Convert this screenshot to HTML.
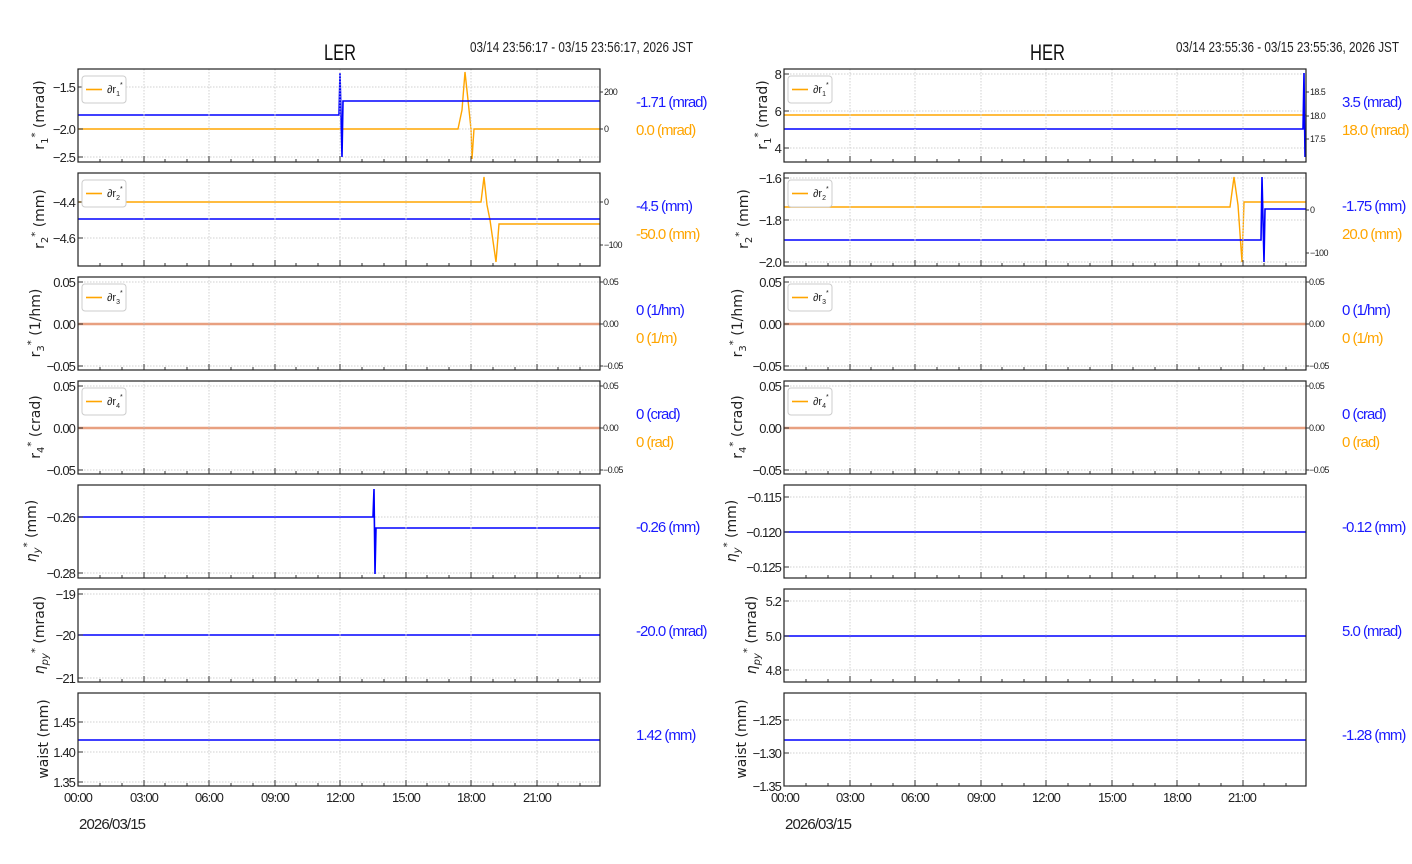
<!DOCTYPE html>
<html><head><meta charset="utf-8"><style>
html,body{margin:0;padding:0;background:#fff;width:1412px;height:864px;overflow:hidden}
svg{display:block}
.t{font-family:"Liberation Sans",sans-serif;font-size:13px;fill:#222;letter-spacing:-0.9px}
.s{font-family:"Liberation Sans",sans-serif;font-size:9px;fill:#222;letter-spacing:-0.6px}
.yl{font-family:"DejaVu Sans","Liberation Sans",sans-serif;font-size:14px;fill:#222}
.vb,.vo{font-family:"Liberation Sans",sans-serif;font-size:15px;letter-spacing:-1px}
.vb{fill:#1a1aff}.vo{fill:#ffa500}
.g{stroke:#d0d0d0;stroke-width:1;stroke-dasharray:1.5 1.5}
.b{fill:none;stroke:#0000ff;stroke-width:1.6}
.o{fill:none;stroke:#ffa500;stroke-width:1.4}
</style></head><body>
<svg width="1412" height="864" viewBox="0 0 1412 864">
<defs>
<g id="fr">
<g class="g"><path d="M66 0V93M131 0V93M197 0V93M262 0V93M328 0V93M393 0V93M459 0V93"/></g>
<path d="M0 93V87M66 93V87M131 93V87M197 93V87M262 93V87M328 93V87M393 93V87M459 93V87M22 93V90M44 93V90M87 93V90M109 93V90M153 93V90M175 93V90M218 93V90M240 93V90M284 93V90M306 93V90M349 93V90M371 93V90M415 93V90M437 93V90M480 93V90M502 93V90" stroke="#333" stroke-width="1"/>
<rect x="0" y="0" width="522" height="93" fill="none" stroke="#222" stroke-width="1.2"/>
</g>
<g id="lg"><rect x="0" y="0" width="44" height="27" rx="3" fill="#fff" stroke="#ccc"/><path d="M4 13.5H20" stroke="#ffa500" stroke-width="1.6"/></g>
</defs>

<text x="324" y="60" textLength="32" lengthAdjust="spacingAndGlyphs" style="font-family:'Liberation Sans',sans-serif;font-size:22px;fill:#111">LER</text>
<text x="470" y="52" textLength="223" lengthAdjust="spacingAndGlyphs" style="font-family:'Liberation Sans',sans-serif;font-size:15px;fill:#222">03/14 23:56:17 - 03/15 23:56:17, 2026 JST</text>
<text x="1030" y="60" textLength="35" lengthAdjust="spacingAndGlyphs" style="font-family:'Liberation Sans',sans-serif;font-size:22px;fill:#111">HER</text>
<text x="1176" y="52" textLength="223" lengthAdjust="spacingAndGlyphs" style="font-family:'Liberation Sans',sans-serif;font-size:15px;fill:#222">03/14 23:55:36 - 03/15 23:55:36, 2026 JST</text>

<g class="g">
<path d="M78 87H600M78 129H600M78 157H600M78 202H600M78 238H600M78 282H600M78 324H600M78 366H600M78 386H600M78 428H600M78 470H600M78 517H600M78 573H600M78 594H600M78 635H600M78 678H600M78 722H600M78 752H600M78 782H600"/>
<path d="M784 74H1306M784 111H1306M784 148H1306M784 178H1306M784 220H1306M784 262H1306M784 282H1306M784 324H1306M784 366H1306M784 386H1306M784 428H1306M784 470H1306M784 497H1306M784 532H1306M784 567H1306M784 601H1306M784 636H1306M784 670H1306M784 720H1306M784 753H1306M784 786H1306"/>
</g>

<path class="o" d="M78 129H458L462 110L465 72L468 100L471 129L472 159L474 129H600"/>
<path class="b" d="M78 115H339L340 73L341 115L342 157L343 101H600"/>
<path class="o" d="M78 202H481L484 177L487 205L490 220L496 262L499 224H600"/>
<path class="b" d="M78 219H600"/>
<path d="M78 324H600" stroke="#e8a080" stroke-width="2.5"/>
<path d="M78 428H600" stroke="#e8a080" stroke-width="2.5"/>
<path class="b" d="M78 517H373L374 489L375 574L376 528H600"/>
<path class="b" d="M78 635H600"/>
<path class="b" d="M78 740H600"/>

<path class="o" d="M784 115H1306"/>
<path class="b" d="M784 129H1303L1304 73L1305 157"/>
<path class="o" d="M784 207H1230L1234 177L1238 205L1242 262L1244 202H1306"/>
<path class="b" d="M784 240H1261L1262 177L1264 262L1265 209H1306"/>
<path d="M784 324H1306" stroke="#e8a080" stroke-width="2.5"/>
<path d="M784 428H1306" stroke="#e8a080" stroke-width="2.5"/>
<path class="b" d="M784 532H1306"/>
<path class="b" d="M784 636H1306"/>
<path class="b" d="M784 740H1306"/>

<use href="#fr" x="78" y="69"/><use href="#fr" x="78" y="173"/><use href="#fr" x="78" y="277"/><use href="#fr" x="78" y="381"/><use href="#fr" x="78" y="485"/><use href="#fr" x="78" y="589"/><use href="#fr" x="78" y="693"/>
<use href="#fr" x="784" y="69"/><use href="#fr" x="784" y="173"/><use href="#fr" x="784" y="277"/><use href="#fr" x="784" y="381"/><use href="#fr" x="784" y="485"/><use href="#fr" x="784" y="589"/><use href="#fr" x="784" y="693"/>

<path stroke="#333" d="M78 87h5M78 129h5M78 157h5M78 202h5M78 238h5M78 282h5M78 324h5M78 366h5M78 386h5M78 428h5M78 470h5M78 517h5M78 573h5M78 594h5M78 635h5M78 678h5M78 722h5M78 752h5M78 782h5
M784 74h5M784 111h5M784 148h5M784 178h5M784 220h5M784 262h5M784 282h5M784 324h5M784 366h5M784 386h5M784 428h5M784 470h5M784 497h5M784 532h5M784 567h5M784 601h5M784 636h5M784 670h5M784 720h5M784 753h5M784 786h5
M600 92h3M600 129h3M600 202h3M600 245h3M600 282h3M600 324h3M600 366h3M600 386h3M600 428h3M600 470h3
M1306 92h3M1306 116h3M1306 139h3M1306 210h3M1306 253h3M1306 282h3M1306 324h3M1306 366h3M1306 386h3M1306 428h3M1306 470h3"/>

<g class="t" text-anchor="end">
<text x="75" y="92">−1.5</text><text x="75" y="134">−2.0</text><text x="75" y="162">−2.5</text>
<text x="75" y="207">−4.4</text><text x="75" y="243">−4.6</text>
<text x="75" y="287">0.05</text><text x="75" y="329">0.00</text><text x="75" y="371">−0.05</text>
<text x="75" y="391">0.05</text><text x="75" y="433">0.00</text><text x="75" y="475">−0.05</text>
<text x="75" y="522">−0.26</text><text x="75" y="578">−0.28</text>
<text x="75" y="599">−19</text><text x="75" y="640">−20</text><text x="75" y="683">−21</text>
<text x="75" y="727">1.45</text><text x="75" y="757">1.40</text><text x="75" y="787">1.35</text>
<text x="781" y="79">8</text><text x="781" y="116">6</text><text x="781" y="153">4</text>
<text x="781" y="183">−1.6</text><text x="781" y="225">−1.8</text><text x="781" y="267">−2.0</text>
<text x="781" y="287">0.05</text><text x="781" y="329">0.00</text><text x="781" y="371">−0.05</text>
<text x="781" y="391">0.05</text><text x="781" y="433">0.00</text><text x="781" y="475">−0.05</text>
<text x="781" y="502">−0.115</text><text x="781" y="537">−0.120</text><text x="781" y="572">−0.125</text>
<text x="781" y="606">5.2</text><text x="781" y="641">5.0</text><text x="781" y="675">4.8</text>
<text x="781" y="725">−1.25</text><text x="781" y="758">−1.30</text><text x="781" y="791">−1.35</text>
</g>
<g class="s">
<text x="604" y="95">200</text><text x="604" y="132">0</text><text x="604" y="205">0</text><text x="604" y="248">−100</text>
<text x="603" y="285">0.05</text><text x="603" y="327">0.00</text><text x="603" y="369">−0.05</text>
<text x="603" y="389">0.05</text><text x="603" y="431">0.00</text><text x="603" y="473">−0.05</text>
<text x="1310" y="95">18.5</text><text x="1310" y="119">18.0</text><text x="1310" y="142">17.5</text>
<text x="1310" y="213">0</text><text x="1310" y="256">−100</text>
<text x="1309" y="285">0.05</text><text x="1309" y="327">0.00</text><text x="1309" y="369">−0.05</text>
<text x="1309" y="389">0.05</text><text x="1309" y="431">0.00</text><text x="1309" y="473">−0.05</text>
</g>

<g class="t" text-anchor="middle">
<text x="78" y="802">00:00</text><text x="144" y="802">03:00</text><text x="209" y="802">06:00</text><text x="275" y="802">09:00</text><text x="340" y="802">12:00</text><text x="406" y="802">15:00</text><text x="471" y="802">18:00</text><text x="537" y="802">21:00</text>
<text x="785" y="802">00:00</text><text x="850" y="802">03:00</text><text x="915" y="802">06:00</text><text x="981" y="802">09:00</text><text x="1046" y="802">12:00</text><text x="1112" y="802">15:00</text><text x="1177" y="802">18:00</text><text x="1242" y="802">21:00</text>
</g>
<text x="79" y="829" class="t" style="font-size:15px">2026/03/15</text>
<text x="785" y="829" class="t" style="font-size:15px">2026/03/15</text>

<use href="#lg" x="82" y="76"/><use href="#lg" x="82" y="180"/><use href="#lg" x="82" y="284"/><use href="#lg" x="82" y="388"/>
<use href="#lg" x="788" y="76"/><use href="#lg" x="788" y="180"/><use href="#lg" x="788" y="284"/><use href="#lg" x="788" y="388"/>
<g style="font-family:'Liberation Sans',sans-serif;font-size:11px;fill:#222">
<text x="107" y="93">∂r<tspan font-size="7" dy="3">1</tspan><tspan font-size="7" dy="-9">*</tspan></text>
<text x="107" y="197">∂r<tspan font-size="7" dy="3">2</tspan><tspan font-size="7" dy="-9">*</tspan></text>
<text x="107" y="301">∂r<tspan font-size="7" dy="3">3</tspan><tspan font-size="7" dy="-9">*</tspan></text>
<text x="107" y="405">∂r<tspan font-size="7" dy="3">4</tspan><tspan font-size="7" dy="-9">*</tspan></text>
<text x="813" y="93">∂r<tspan font-size="7" dy="3">1</tspan><tspan font-size="7" dy="-9">*</tspan></text>
<text x="813" y="197">∂r<tspan font-size="7" dy="3">2</tspan><tspan font-size="7" dy="-9">*</tspan></text>
<text x="813" y="301">∂r<tspan font-size="7" dy="3">3</tspan><tspan font-size="7" dy="-9">*</tspan></text>
<text x="813" y="405">∂r<tspan font-size="7" dy="3">4</tspan><tspan font-size="7" dy="-9">*</tspan></text>
</g>

<g class="yl" text-anchor="middle">
<text transform="translate(44 115) rotate(-90)">r<tspan font-size="10" dy="4">1</tspan><tspan font-size="10" dy="-10">*</tspan><tspan dy="6"> (mrad)</tspan></text>
<text transform="translate(44 219) rotate(-90)">r<tspan font-size="10" dy="4">2</tspan><tspan font-size="10" dy="-10">*</tspan><tspan dy="6"> (mm)</tspan></text>
<text transform="translate(40 323) rotate(-90)">r<tspan font-size="10" dy="4">3</tspan><tspan font-size="10" dy="-10">*</tspan><tspan dy="6"> (1/hm)</tspan></text>
<text transform="translate(40 427) rotate(-90)">r<tspan font-size="10" dy="4">4</tspan><tspan font-size="10" dy="-10">*</tspan><tspan dy="6"> (crad)</tspan></text>
<text transform="translate(36 531) rotate(-90)"><tspan font-style="italic">η</tspan><tspan font-size="10" dy="4" font-style="italic">y</tspan><tspan font-size="10" dy="-10">*</tspan><tspan dy="6"> (mm)</tspan></text>
<text transform="translate(44 635) rotate(-90)"><tspan font-style="italic">η</tspan><tspan font-size="10" dy="4" font-style="italic">py</tspan><tspan font-size="10" dy="-10">*</tspan><tspan dy="6"> (mrad)</tspan></text>
<text transform="translate(48 739) rotate(-90)">waist (mm)</text>
<text transform="translate(767 115) rotate(-90)">r<tspan font-size="10" dy="4">1</tspan><tspan font-size="10" dy="-10">*</tspan><tspan dy="6"> (mrad)</tspan></text>
<text transform="translate(748 219) rotate(-90)">r<tspan font-size="10" dy="4">2</tspan><tspan font-size="10" dy="-10">*</tspan><tspan dy="6"> (mm)</tspan></text>
<text transform="translate(742 323) rotate(-90)">r<tspan font-size="10" dy="4">3</tspan><tspan font-size="10" dy="-10">*</tspan><tspan dy="6"> (1/hm)</tspan></text>
<text transform="translate(742 427) rotate(-90)">r<tspan font-size="10" dy="4">4</tspan><tspan font-size="10" dy="-10">*</tspan><tspan dy="6"> (crad)</tspan></text>
<text transform="translate(736 531) rotate(-90)"><tspan font-style="italic">η</tspan><tspan font-size="10" dy="4" font-style="italic">y</tspan><tspan font-size="10" dy="-10">*</tspan><tspan dy="6"> (mm)</tspan></text>
<text transform="translate(756 635) rotate(-90)"><tspan font-style="italic">η</tspan><tspan font-size="10" dy="4" font-style="italic">py</tspan><tspan font-size="10" dy="-10">*</tspan><tspan dy="6"> (mrad)</tspan></text>
<text transform="translate(746 739) rotate(-90)">waist (mm)</text>
</g>

<text x="636" y="107" class="vb">-1.71 (mrad)</text><text x="636" y="135" class="vo">0.0 (mrad)</text>
<text x="636" y="211" class="vb">-4.5 (mm)</text><text x="636" y="239" class="vo">-50.0 (mm)</text>
<text x="636" y="315" class="vb">0 (1/hm)</text><text x="636" y="343" class="vo">0 (1/m)</text>
<text x="636" y="419" class="vb">0 (crad)</text><text x="636" y="447" class="vo">0 (rad)</text>
<text x="636" y="532" class="vb">-0.26 (mm)</text>
<text x="636" y="636" class="vb">-20.0 (mrad)</text>
<text x="636" y="740" class="vb">1.42 (mm)</text>
<text x="1342" y="107" class="vb">3.5 (mrad)</text><text x="1342" y="135" class="vo">18.0 (mrad)</text>
<text x="1342" y="211" class="vb">-1.75 (mm)</text><text x="1342" y="239" class="vo">20.0 (mm)</text>
<text x="1342" y="315" class="vb">0 (1/hm)</text><text x="1342" y="343" class="vo">0 (1/m)</text>
<text x="1342" y="419" class="vb">0 (crad)</text><text x="1342" y="447" class="vo">0 (rad)</text>
<text x="1342" y="532" class="vb">-0.12 (mm)</text>
<text x="1342" y="636" class="vb">5.0 (mrad)</text>
<text x="1342" y="740" class="vb">-1.28 (mm)</text>
</svg>
</body></html>
